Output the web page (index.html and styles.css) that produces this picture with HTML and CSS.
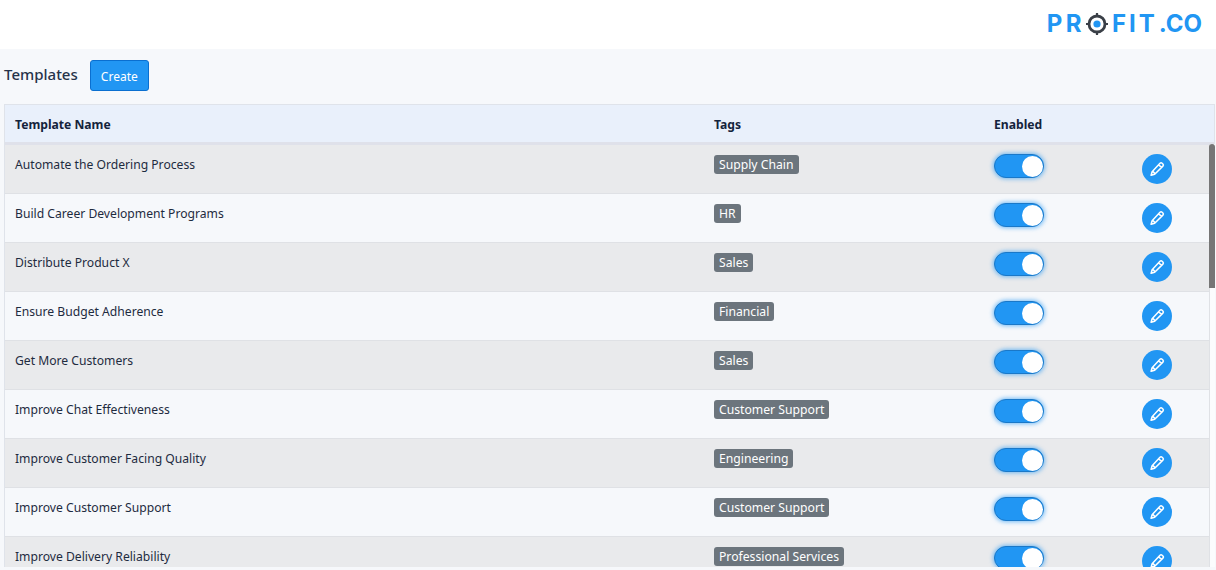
FILE: index.html
```html
<!DOCTYPE html>
<html lang="en">
<head>
<meta charset="utf-8">
<title>Templates</title>
<link rel="stylesheet" href="styles.css">
</head>
<body>
<svg class="sprite" width="0" height="0"><defs>
<symbol id="pen" viewBox="0 0 16 16"><path d="M11 2.2a1.5 1.5 0 0 1 2.1 0l.8.8a1.5 1.5 0 0 1 0 2.1l-8.2 8.2-3.6 1 1-3.6zM9.6 3.6l2.9 2.9M3.8 10.4l1.9 1.9" fill="none" stroke="currentColor" stroke-width="1.5" stroke-linejoin="round"/></symbol>
</defs></svg>
<header class="topbar">
  <div class="logo"><span class="logo-a">PR</span><svg class="logo-o" viewBox="0 0 24 24" width="24" height="24"><circle cx="12" cy="12" r="8" fill="none" stroke="#3a3f47" stroke-width="2.8"/><circle cx="12" cy="12" r="3.6" fill="#2196f3"/><path d="M12 1v3M12 20v3M1 12h3M20 12h3" stroke="#3a3f47" stroke-width="2.2"/></svg><span class="logo-b">FIT</span><span class="logo-c">.CO</span></div>
</header>
<main class="page">
  <div class="titlebar">
    <h1 class="title">Templates</h1>
    <button class="btn-create" type="button">Create</button>
  </div>
  <section class="table">
    <div class="row head"><div>Template Name</div><div>Tags</div><div>Enabled</div><div></div></div>
    <div class="body">
      <div class="row"><div>Automate the Ordering Process</div><div><span class="tag">Supply Chain</span></div><div><span class="toggle"></span></div><div><button class="edit" type="button"><svg><use href="#pen"/></svg></button></div></div>
      <div class="row"><div>Build Career Development Programs</div><div><span class="tag">HR</span></div><div><span class="toggle"></span></div><div><button class="edit" type="button"><svg><use href="#pen"/></svg></button></div></div>
      <div class="row"><div>Distribute Product X</div><div><span class="tag">Sales</span></div><div><span class="toggle"></span></div><div><button class="edit" type="button"><svg><use href="#pen"/></svg></button></div></div>
      <div class="row"><div>Ensure Budget Adherence</div><div><span class="tag">Financial</span></div><div><span class="toggle"></span></div><div><button class="edit" type="button"><svg><use href="#pen"/></svg></button></div></div>
      <div class="row"><div>Get More Customers</div><div><span class="tag">Sales</span></div><div><span class="toggle"></span></div><div><button class="edit" type="button"><svg><use href="#pen"/></svg></button></div></div>
      <div class="row"><div>Improve Chat Effectiveness</div><div><span class="tag">Customer Support</span></div><div><span class="toggle"></span></div><div><button class="edit" type="button"><svg><use href="#pen"/></svg></button></div></div>
      <div class="row"><div>Improve Customer Facing Quality</div><div><span class="tag">Engineering</span></div><div><span class="toggle"></span></div><div><button class="edit" type="button"><svg><use href="#pen"/></svg></button></div></div>
      <div class="row"><div>Improve Customer Support</div><div><span class="tag">Customer Support</span></div><div><span class="toggle"></span></div><div><button class="edit" type="button"><svg><use href="#pen"/></svg></button></div></div>
      <div class="row"><div>Improve Delivery Reliability</div><div><span class="tag">Professional Services</span></div><div><span class="toggle"></span></div><div><button class="edit" type="button"><svg><use href="#pen"/></svg></button></div></div>
    </div>
    <div class="scrollbar"><div class="thumb"></div></div>
  </section>
</main>
</body>
</html>
```
FILE: styles.css
```css
* { box-sizing: border-box; }
html, body { margin: 0; height: 100%; overflow: hidden; }
body { background: #f6f8fb; color: #1e2b3f; font-family: "Noto Sans", "Open Sans", sans-serif; font-size: 12.15px; display: flex; flex-direction: column; }
.sprite { display: block; }
.topbar { height: 49px; flex: none; background: #fff; display: flex; justify-content: flex-end; align-items: center; padding: 0 14px 2px 0; }
.logo { display: flex; align-items: center; color: #2196f3; font-family: Inter, sans-serif; font-weight: 700; font-size: 24px; line-height: 1; }
.logo-a { letter-spacing: 3.4px; }
.logo-b { letter-spacing: 3px; margin-left: 3px; }
.logo-c { letter-spacing: 0; margin-left: 1px; }
.page { flex: none; height: 518px; padding: 11px 1px 0 4px; display: flex; flex-direction: column; }
.titlebar { display: flex; align-items: center; gap: 12px; height: 31px; flex: none; margin-bottom: 13px; }
.title { margin: 0 0 4px; font-size: 15px; font-weight: 500; color: #26334a; }
.btn-create { width: 59px; height: 31px; background: #2196f3; border: 1px solid #0a6fd0; border-radius: 3px; color: #fff; font: 12px "Noto Sans", sans-serif; padding: 2px 0 0; }
.table { flex: none; height: 463px; position: relative; border: 1px solid #dfe3ea; border-bottom: 0; display: flex; flex-direction: column; }
.row { display: grid; grid-template-columns: 699px 280px 148px 1fr; height: 49px; background: #f6f8fb; border-bottom: 1px solid #dfe1e5; flex: none; }
.row > div { padding: 10px 10px 0; line-height: 20px; }
.body .row:nth-child(odd) { background: #e9eaec; }
.head { height: 40px; background: #e9f0fb; border-bottom: 3px solid #dfe1ea; font-weight: 700; color: #14233c; }
.row.head > div { padding-top: 10px; }
.body { flex: 1; min-height: 0; overflow: hidden; }
.scrollbar { position: absolute; top: 39px; right: -1px; bottom: 0; width: 6px; background: #fbfcfd; box-shadow: inset 1px 0 0 #dfe1e5; }
.thumb { height: 144px; background: #767676; border-radius: 3px 3px 0 0; }
.tag { display: inline-block; background: #6c757d; color: #fff; border-radius: 3px; padding: 0 5px; font-size: 12.2px; line-height: 19px; vertical-align: top; }
.toggle { display: block; position: relative; width: 50px; height: 24px; margin-top: -1px; background: #2196f3; border: 1px solid #1a78c8; border-radius: 12px; box-shadow: 0 0 4px 1px rgba(33,150,243,.6); }
.toggle::after { content: ""; position: absolute; right: 0; top: 0; width: 21px; height: 21px; margin-top: .5px; background: #fff; border-radius: 50%; }
.edit { display: flex; align-items: center; justify-content: center; width: 30px; height: 30px; margin-top: -1px; padding: 0; border: 0; border-radius: 50%; background: #2196f3; color: #fff; }
.edit svg { width: 16px; height: 16px; }
```
